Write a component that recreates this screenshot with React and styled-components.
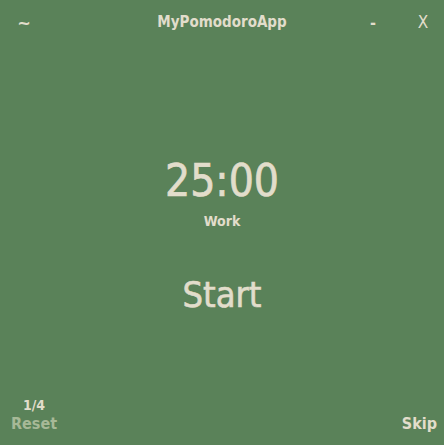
import React from "react";
import styled, { createGlobalStyle } from "styled-components";

const GlobalStyle = createGlobalStyle`
  html, body {
    margin: 0;
    padding: 0;
    background: #5a8259;
  }
`;

const Window = styled.div`
  width: 444px;
  height: 445px;
  display: flex;
  flex-direction: column;
  background: #5a8259;
  color: #e2ddcb;
  font-family: "DejaVu Sans Condensed", "DejaVu Sans", sans-serif;
  font-weight: bold;
  box-sizing: border-box;
`;

const TitleBar = styled.div`
  height: 44px;
  display: grid;
  grid-template-columns: 48px 1fr 58px 42px;
  align-items: center;
`;

const BarButton = styled.div`
  text-align: center;
  font-size: ${(p) => p.size || 16}px;
  font-weight: ${(p) => p.weight || "bold"};
`;

const Title = styled.div`
  text-align: center;
  font-size: 15px;
  padding-left: 52px;
`;

const Center = styled.div`
  flex: 1;
  display: flex;
  flex-direction: column;
  align-items: center;
  padding-top: 111px;
`;

const Time = styled.div`
  font-size: 44px;
  font-weight: normal;
  line-height: 52px;
  -webkit-text-stroke: 0.7px currentColor;
`;

const Phase = styled.div`
  font-size: 14px;
  line-height: 18px;
  margin-top: 5px;
`;

const StartButton = styled.button`
  margin-top: 44px;
  background: none;
  border: none;
  color: inherit;
  font-family: inherit;
  font-size: 36px;
  font-weight: normal;
  -webkit-text-stroke: 0.6px currentColor;
  cursor: pointer;
  padding: 0;
`;

const Footer = styled.div`
  display: flex;
  justify-content: space-between;
  align-items: flex-end;
  padding: 0 7px 11px 12px;
`;

const Left = styled.div`
  display: flex;
  flex-direction: column;
  align-items: center;
  width: 44px;
`;

const Counter = styled.div`
  font-size: 14px;
  line-height: 18px;
`;

const FootLink = styled.div`
  font-size: 16px;
  line-height: 20px;
  color: ${(p) => (p.dim ? "#a7b997" : "#e2ddcb")};
`;

export default function App() {
  return (
    <>
      <GlobalStyle />
      <Window>
        <TitleBar>
          <BarButton size={18}>~</BarButton>
          <Title>MyPomodoroApp</Title>
          <BarButton>-</BarButton>
          <BarButton size={17} weight="normal">X</BarButton>
        </TitleBar>
        <Center>
          <Time>25:00</Time>
          <Phase>Work</Phase>
          <StartButton>Start</StartButton>
        </Center>
        <Footer>
          <Left>
            <Counter>1/4</Counter>
            <FootLink dim>Reset</FootLink>
          </Left>
          <FootLink>Skip</FootLink>
        </Footer>
      </Window>
    </>
  );
}
